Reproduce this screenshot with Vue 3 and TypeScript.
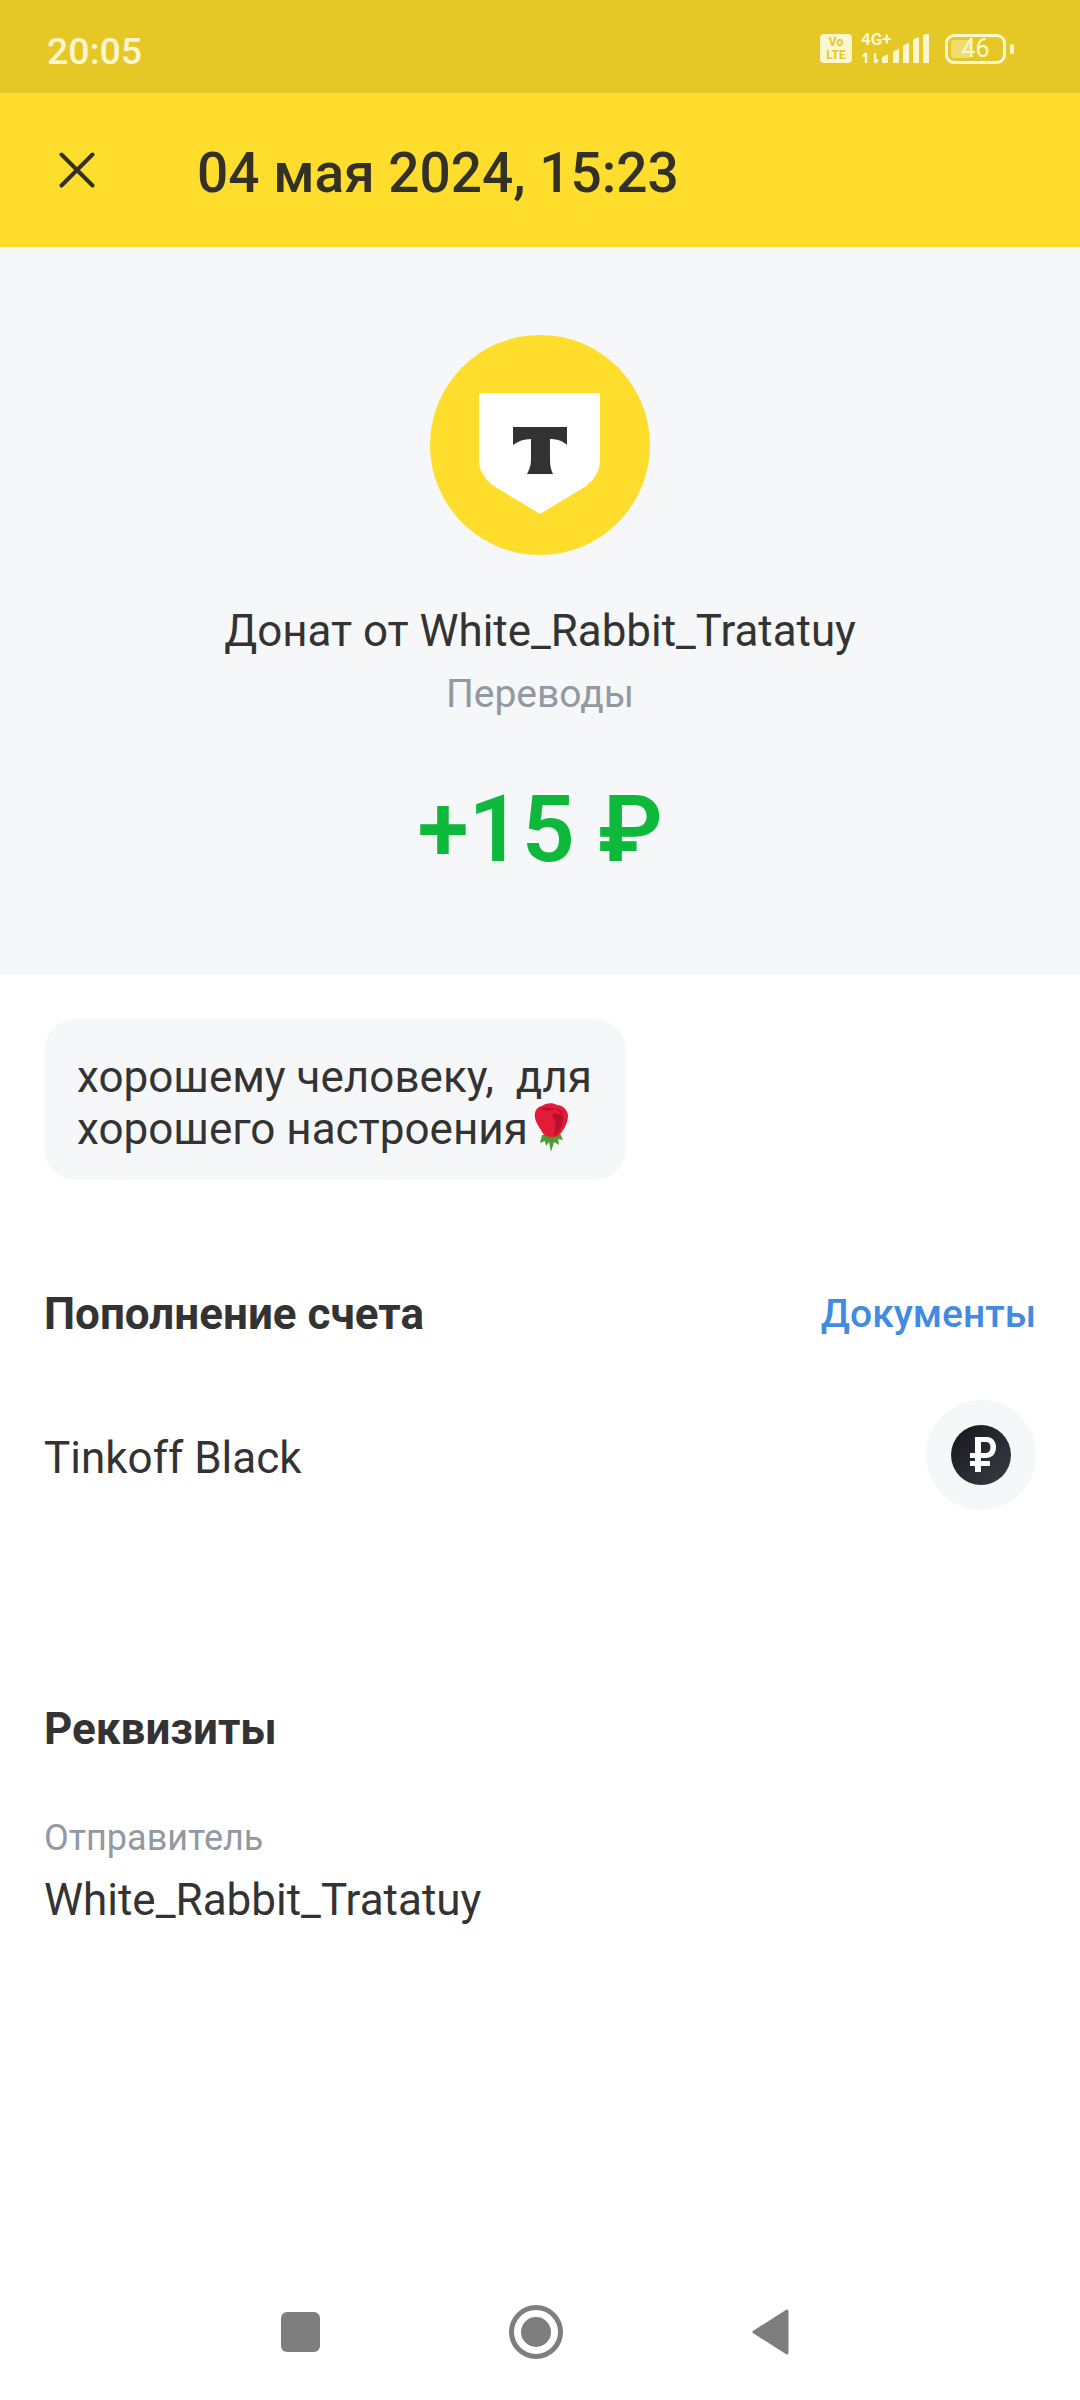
<script setup lang="ts">
const title: string = '04 мая 2024, 15:23'
</script>

<template>
  <div class="screen">
    <div class="status">
      <span class="time">20:05</span>
      <svg class="status-icons" width="110" height="42" viewBox="0 -6 110 42">
        <rect x="0" y="3" width="32" height="29" rx="4" fill="#fdf6cf" />
        <text x="16" y="15" class="vo">Vo</text>
        <text x="16" y="28" class="vo">LTE</text>
        <text x="41" y="14" class="lte">4G+</text>
        <path d="M46 22v10M43 25.500l3-3.500M55 22v10M55 32l3-3.500" stroke="#fdf6cf" stroke-width="2.500" fill="none" />
        <path d="M62 28c0-2 1-3 3-3.500l3-1V32h-6zM73 22c0-1 1-2 2-2.500l4-1.500v14h-6zM83 16c0-1 1-2 2-2.500l4-1.500v20h-6zM93 10c0-1 1-2 2-2.500L99 6v26h-6zM103 6c0-2 1-3 3-3h3v29h-6z" fill="#fdf6cf" />
      </svg>
      <div class="battery">
        <span class="battery-box"><span class="battery-fill"></span><span class="battery-num">46</span></span>
        <span class="battery-tip"></span>
      </div>
    </div>

    <header class="bar">
      <svg class="close" width="36" height="36" viewBox="0 0 36 36">
        <path d="M2.500 2.500l31 31M33.500 2.500l-31 31" stroke="#333125" stroke-width="4" stroke-linecap="round" fill="none" />
      </svg>
      <h1 class="title">{{ title }}</h1>
    </header>

    <section class="hero">
      <svg class="logo" width="220" height="220" viewBox="0 0 220 220">
        <circle cx="110" cy="110" r="110" fill="#ffdd2d" />
        <path d="M49 58H170V125C170 137 163 147 153 153L110 179L67 153C57 147 49 137 49 125Z" fill="#fff" />
        <path d="M83 92H137V110C133 106 127 104 120 104V125C120 131 121 135 123 139H97C99 135 101 131 101 125V104C94 104 88 106 83 110Z" fill="#333" />
      </svg>
      <div class="name">Донат от White_Rabbit_Tratatuy</div>
      <div class="category">Переводы</div>
      <div class="amount">+15 ₽</div>
    </section>

    <main class="content">
      <div class="bubble">
        <div>хорошему человеку,&nbsp; для</div>
        <div class="line">хорошего настроения
          <svg class="rose" width="34" height="49" viewBox="0 0 34 49">
            <path d="M8 32L6 40l5-2 1 5 3-4 2 10 3-10 5 3-1-6 5 1-3-7z" fill="#4f9a35" />
            <path d="M1 15C0 8 3 4 8 3c3-3 11-4 15-1 5 0 10 4 11 10 0 7-3 13-7 18-3 3-7 5-10 4-4 0-8-2-10-7C4 23 2 19 1 15z" fill="#e41a36" />
            <path d="M6 5c5 3 11 3 15 1 3 1 6 3 7 7-3-3-7-3-10-1 3 4 5 11 2 21 5-3 9-10 9-18 0-4-1-6-3-8C17 5 11 4 6 5z" fill="#b8102e" />
          </svg>
        </div>
      </div>

      <div class="row head-row">
        <h2 class="heading">Пополнение счета</h2>
        <span class="link">Документы</span>
      </div>

      <div class="row account">
        <span class="text account-name">Tinkoff Black</span>
        <span class="coin-wrap">
          <svg width="60" height="60" viewBox="0 0 60 60">
            <defs>
              <linearGradient id="coin" x1="0" y1="0" x2="1" y2="1">
                <stop offset="0" stop-color="#14161b" />
                <stop offset="1" stop-color="#3a3d45" />
              </linearGradient>
            </defs>
            <circle cx="30" cy="30" r="30" fill="url(#coin)" />
            <path d="M24 12H36C41 12 45 16 45 22C45 29 41 33 35 33H30V36H39V41H30V47H24V41H19V36H24V33H19V28H24ZM30 17V28H35C38 28 39.500 25 39.500 22.500C39.500 19 38 17 35 17Z" fill="#fff" fill-rule="evenodd" />
          </svg>
        </span>
      </div>

      <h2 class="heading details">Реквизиты</h2>
      <div class="label">Отправитель</div>
      <div class="text sender">White_Rabbit_Tratatuy</div>
    </main>

    <nav class="nav">
      <span class="nav-square"></span>
      <span class="nav-home"><span class="nav-dot"></span></span>
      <svg width="37" height="46" viewBox="0 0 37 46">
        <path d="M35 2L2 23l33 21z" fill="#7e7e7e" stroke="#7e7e7e" stroke-width="3" stroke-linejoin="round" />
      </svg>
    </nav>
  </div>
</template>

<style>
html, body { margin: 0; padding: 0; background: #fff; }
</style>

<style scoped>
.screen {
  width: 1080px;
  height: 2400px;
  display: flex;
  flex-direction: column;
  background: #fff;
  color: #333;
  font-family: Roboto, "Noto Sans", sans-serif;
  overflow: hidden;
}
.status {
  height: 93px;
  box-sizing: border-box;
  background: #e5c826;
  display: flex;
  align-items: center;
  padding: 21px 66px 21px 47px;
}
.time {
  font-size: 37.500px;
  font-weight: 500;
  color: #fdf6cf;
  flex: 1;
  line-height: 40px;
  margin-top: 8px;
}
.status-icons { display: block; margin: 0 15px 2px 0; }
.vo {
  font: 700 12px Roboto, sans-serif;
  fill: #e5c826;
  text-anchor: middle;
}
.lte { font: 700 17px Roboto, sans-serif; fill: #fdf6cf; }
.battery { display: flex; align-items: center; gap: 4px; margin-top: 4px; }
.battery-box {
  width: 61px;
  height: 30px;
  box-sizing: border-box;
  border: 3px solid #fdf6cf;
  border-radius: 9px;
  display: flex;
  align-items: center;
  justify-content: center;
  position: relative;
}
.battery-fill {
  position: absolute;
  left: 3px;
  top: 3px;
  bottom: 3px;
  width: 20px;
  border-radius: 3px;
  background: rgba(253, 246, 207, 0.45);
}
.battery-num {
  position: relative;
  font-size: 25px;
  line-height: 24px;
  color: #fdf6cf;
}
.battery-tip {
  width: 4px;
  height: 10px;
  border-radius: 2px;
  background: #fdf6cf;
}
.bar {
  height: 154px;
  box-sizing: border-box;
  background: #ffdd2d;
  display: flex;
  align-items: center;
  padding-left: 59px;
}
.close { display: block; }
.title {
  margin: 6px 0 0 102px;
  font-size: 55px;
  font-weight: 500;
  color: #333125;
  line-height: 64px;
}
.hero {
  height: 728px;
  box-sizing: border-box;
  background: #f6f7f8;
  display: flex;
  flex-direction: column;
  align-items: center;
  padding-top: 88px;
}
.logo { display: block; }
.name {
  margin-top: 48px;
  font-size: 43.900px;
  line-height: 56px;
  color: #333;
}
.category {
  margin-top: 9px;
  font-size: 39px;
  line-height: 52px;
  color: #9299a2;
}
.amount {
  margin-top: 58px;
  font-size: 93px;
  font-weight: 600;
  line-height: 104px;
  color: #0db83a;
}
.content {
  flex: 1;
  padding: 44px 44px 0;
  display: flex;
  flex-direction: column;
  align-items: flex-start;
}
.bubble {
  width: 582px;
  height: 161px;
  box-sizing: border-box;
  padding: 32px 0 0 33px;
  background: #f6f7f8;
  border-radius: 32px;
  font-size: 44px;
  line-height: 52px;
  color: #333;
  white-space: nowrap;
}
.line { display: flex; align-items: center; gap: 6px; height: 52px; }
.rose { display: block; margin-top: -3px; }
.row {
  width: 992px;
  display: flex;
  align-items: center;
  justify-content: space-between;
}
.head-row { margin-top: 104px; height: 60px; }
.heading {
  margin: 0;
  font-size: 44px;
  font-weight: 700;
  line-height: 60px;
  color: #333;
}
.link {
  font-size: 39px;
  font-weight: 500;
  color: #428bdf;
}
.account { margin-top: 56px; height: 110px; }
.text { font-size: 44px; line-height: 56px; color: #333; }
.account-name { margin-top: 6px; }
.coin-wrap {
  width: 110px;
  height: 110px;
  border-radius: 50%;
  background: #f6f7f8;
  display: flex;
  align-items: center;
  justify-content: center;
}
.coin-wrap svg { display: block; }
.details { margin-top: 189px; }
.label {
  margin-top: 57px;
  font-size: 36px;
  line-height: 44px;
  color: #9299a2;
}
.sender { margin-top: 12px; }
.nav {
  height: 137px;
  box-sizing: border-box;
  display: flex;
  align-items: center;
  padding: 0 0 0 281px;
  gap: 189px;
}
.nav-square {
  width: 39px;
  height: 40px;
  border-radius: 6px;
  background: #7e7e7e;
}
.nav-home {
  width: 44px;
  height: 44px;
  border: 5px solid #7e7e7e;
  border-radius: 50%;
  display: flex;
  align-items: center;
  justify-content: center;
}
.nav-dot {
  width: 30px;
  height: 30px;
  border-radius: 50%;
  background: #7e7e7e;
}
</style>
